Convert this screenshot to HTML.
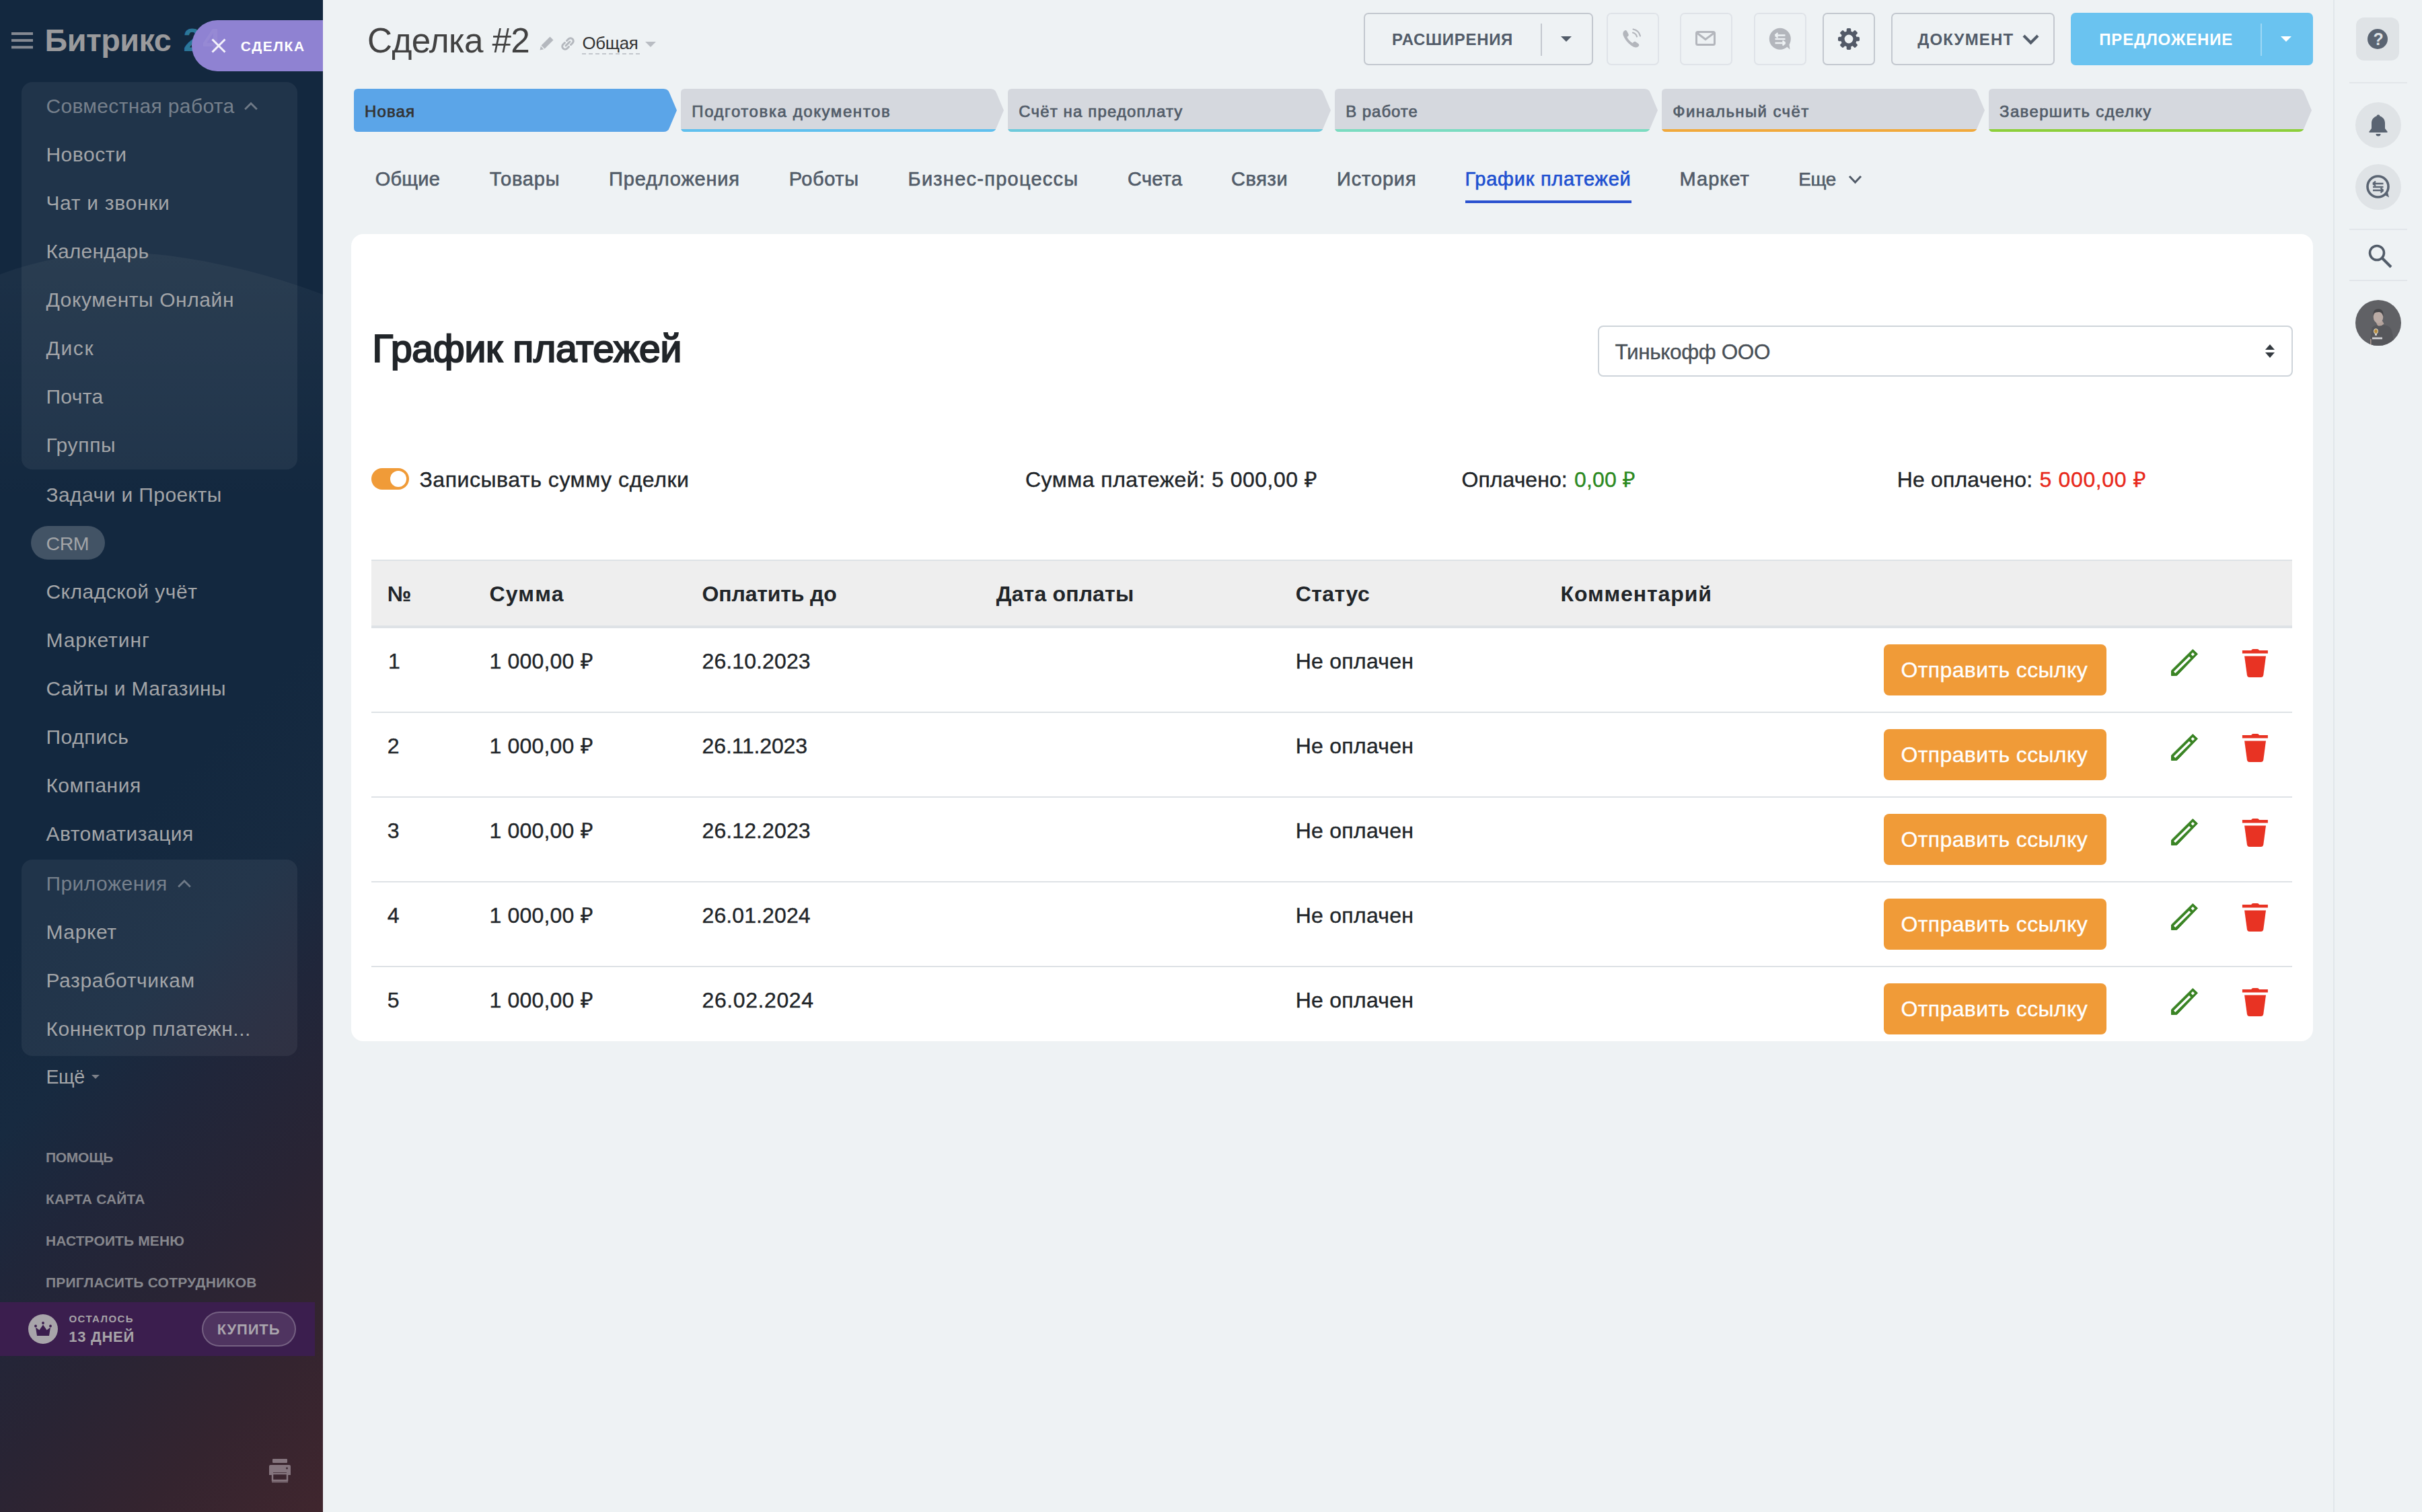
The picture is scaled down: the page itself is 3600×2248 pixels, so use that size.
<!DOCTYPE html>
<html lang="ru">
<head>
<meta charset="utf-8">
<title>Сделка #2</title>
<style>
*{box-sizing:border-box;margin:0;padding:0}
html,body{width:3600px;height:2248px;overflow:hidden;background:#eef2f4;font-family:"Liberation Sans",sans-serif}
@media (max-width:2000px){html{zoom:.5}}
#root{position:relative;width:3600px;height:2248px;overflow:hidden}
.a{position:absolute}
.t{position:absolute;white-space:pre;line-height:1;display:block}
#side{position:absolute;left:0;top:0;width:480px;height:2248px;overflow:hidden;
 background:linear-gradient(135deg,#13283f 0%,#13283f 52%,#172a40 62%,#20263a 70%,#292434 80%,#34242f 90%,#40262e 100%)}
.grp{position:absolute;left:32px;width:410px;border-radius:16px;background:rgba(255,255,255,.06)}
.hb{position:absolute;top:19px;height:78px;border:2px solid #c3c8cf;border-radius:7px}
.hb.dim{border-color:#dfe3e8}
.stage{position:absolute;top:132px;height:64px;width:480px}
.rb-c{position:absolute;width:68px;height:68px;border-radius:50%;background:#dfe3e6;left:3501px}
.rb-l{position:absolute;left:3492px;width:86px;height:2px;background:#e2e6ea}
.btn{position:absolute;left:2800px;width:331px;height:76px;border-radius:8px;background:#f09b38}
.rowl{position:absolute;left:552px;width:2855px;height:2px;background:#dee2e6}
</style>
</head>
<body>
<div id="root">

<!-- ======= LEFT SIDEBAR ======= -->
<div id="side">
  <svg class="a" style="left:0;top:330px" width="480" height="420" viewBox="0 0 480 420"><defs><linearGradient id="cl" x1="0" y1="0" x2="0" y2="1"><stop offset="0" stop-color="#fff" stop-opacity=".042"/><stop offset="1" stop-color="#fff" stop-opacity="0"/></linearGradient></defs><path d="M0 78 C90 44 180 42 250 50 C340 62 420 85 480 108 L480 420 L0 420Z" fill="url(#cl)"/></svg>
  <div class="grp" style="top:122px;height:576px"></div>
  <div class="grp" style="top:1278px;height:292px"></div>
  <div class="a" style="left:46px;top:782px;width:110px;height:50px;border-radius:25px;background:rgba(255,255,255,.2)"></div>
  <div class="a" style="left:17px;top:48px;width:32px;height:3.600px;background:#858a93;box-shadow:0 10.100px 0 #858a93,0 20.300px 0 #858a93"></div>
  <div class="a" style="left:0;top:1936px;width:468px;height:80px;background:#3b1e4e"></div>
  <div class="a" style="left:300px;top:1950px;width:140px;height:52px;border-radius:26px;border:2px solid rgba(255,255,255,.22);background:rgba(255,255,255,.1)"></div>
</div>
<!-- purple slider label -->
<div class="a" style="left:285px;top:30px;width:195px;height:76px;border-radius:38px 0 0 38px;background:#8f82d2;z-index:2"></div>
<svg class="a" style="left:313px;top:56px;z-index:3" width="24" height="24" viewBox="0 0 24 24"><path d="M2.500 2.500L21.500 21.500M21.500 2.500L2.500 21.500" stroke="#f4f2fb" stroke-width="3" fill="none"/></svg>
<span class="t" style="left:301px;top:36.200px;font-size:48px;font-weight:700;color:rgba(255,255,255,.07);z-index:3">4</span>
<!-- sidebar chevrons -->
<svg class="a" style="left:361px;top:149px" width="24" height="16" viewBox="0 0 24 16"><path d="M3.200 13.500L12 4.700L20.800 13.500" stroke="#6f7a87" stroke-width="2.800" fill="none"/></svg>
<svg class="a" style="left:262px;top:1305px" width="24" height="16" viewBox="0 0 24 16"><path d="M3.200 13.500L12 4.700L20.800 13.500" stroke="#6f7a87" stroke-width="2.800" fill="none"/></svg>
<svg class="a" style="left:136px;top:1598px" width="12" height="6" viewBox="0 0 12 6"><path d="M0 0H12L6 6Z" fill="#7b7f88"/></svg>
<!-- crown -->
<svg class="a" style="left:42px;top:1954px" width="44" height="44" viewBox="0 0 44 44"><circle cx="22" cy="22" r="22" fill="#a8a5aa"/><path d="M11 19.5L16.5 23.5L22 15.5L27.5 23.5L33 19.5L31 32H13Z" fill="#3b1e4e"/><circle cx="11" cy="17.5" r="1.9" fill="#3b1e4e"/><circle cx="22" cy="13" r="1.9" fill="#3b1e4e"/><circle cx="33" cy="17.5" r="1.9" fill="#3b1e4e"/></svg>
<!-- printer -->
<svg class="a" style="left:400px;top:2169px" width="32" height="36" viewBox="0 0 32 36"><rect x="5" y="0" width="22" height="6" rx="1" fill="#85757e"/><path d="M2 9H30a2 2 0 0 1 2 2V24H26V20H6V24H0V11a2 2 0 0 1 2-2Z" fill="#85757e"/><rect x="5" y="22" width="22" height="10" fill="none" stroke="#85757e" stroke-width="2.5"/><rect x="4" y="33.5" width="24" height="1.6" fill="#85757e"/><circle cx="26.5" cy="14" r="1.4" fill="#3a2631"/></svg>

<!-- ======= HEADER ======= -->
<svg class="a" style="left:802px;top:53px" width="22" height="22" viewBox="0 0 22 22"><path d="M15.5 1.5L20.5 6.5L7.5 19.5L2.5 14.5Z M1.8 15.8L6.2 20.2L0.5 21.5Z" fill="#b4b8be"/></svg>
<svg class="a" style="left:833px;top:54px" width="22" height="22" viewBox="0 0 22 22"><g fill="none" stroke="#b4b8be" stroke-width="3" stroke-linecap="round"><path d="M9.5 6.5L12 4a4.2 4.2 0 0 1 6 6l-2.5 2.5"/><path d="M12.5 15.5L10 18a4.2 4.2 0 0 1-6-6l2.5-2.5"/><path d="M8 14L14 8"/></g></svg>
<div class="a" style="left:865px;top:79px;width:86px;height:2px;background:repeating-linear-gradient(90deg,#c3c7cd 0 6px,transparent 6px 10px)"></div>
<svg class="a" style="left:959px;top:62px" width="16" height="8" viewBox="0 0 16 8"><path d="M0 0H16L8 8Z" fill="#b9bdc3"/></svg>

<div class="hb" style="left:2027px;width:341px"></div>
<div class="a" style="left:2290px;top:35px;width:2px;height:48px;background:#c3c8cf"></div>
<svg class="a" style="left:2320px;top:54px" width="16" height="8" viewBox="0 0 16 8"><path d="M0 0H16L8 8Z" fill="#525c69"/></svg>
<div class="hb dim" style="left:2388px;width:78px"></div>
<div class="hb dim" style="left:2497px;width:78px"></div>
<div class="hb dim" style="left:2607px;width:78px"></div>
<div class="hb" style="left:2709px;width:78px"></div>
<div class="hb" style="left:2811px;width:243px"></div>
<div class="a" style="left:3078px;top:19px;width:360px;height:78px;border-radius:7px;background:#6ac3f0"></div>
<div class="a" style="left:3360px;top:35px;width:2px;height:48px;background:rgba(255,255,255,.35)"></div>
<svg class="a" style="left:3390px;top:54px" width="16" height="8" viewBox="0 0 16 8"><path d="M0 0H16L8 8Z" fill="#fff"/></svg>
<svg class="a" style="left:3006px;top:51px" width="25" height="16" viewBox="0 0 25 16"><path d="M2 2L12.500 12.500L23 2" stroke="#525c69" stroke-width="4.200" fill="none"/></svg>
<!-- phone -->
<svg class="a" style="left:2410px;top:42px" width="32" height="32" viewBox="0 0 32 32"><path d="M3.5 4.5c1.6-2 3.8-2.3 5 .2l2 4c.6 1.4.2 2.4-.9 3.4l-1.2 1c1.5 3.6 4.6 7 8.2 9l1.3-1.4c1-1 2.2-1.300 3.400-.500l3.700 2.500c2 1.400 1.500 3.400-.300 4.800-2.600 2-6.300 1-10.300-2C8.500 21 4.500 15.500 2.700 10.500 2 8.300 2.300 6 3.500 4.500Z" fill="#b3b6bc"/><path d="M17 6.500a8.500 8.500 0 0 1 6 6M17.500 1.500a13.500 13.500 0 0 1 10.500 10" stroke="#b3b6bc" stroke-width="2.200" fill="none" stroke-linecap="round"/></svg>
<!-- mail -->
<svg class="a" style="left:2520px;top:46px" width="30" height="22" viewBox="0 0 30 22"><rect x="1.500" y="1.500" width="27" height="19" rx="2" fill="none" stroke="#b3b6bc" stroke-width="3"/><path d="M3 3.500L15 12.500L27 3.500" fill="none" stroke="#b3b6bc" stroke-width="3"/></svg>
<!-- chat -->
<svg class="a" style="left:2629px;top:41px" width="34" height="34" viewBox="0 0 34 34"><circle cx="16.800" cy="16.800" r="16" fill="#b3b6bc"/><path d="M24 26L31.500 32.500L30 22Z" fill="#b3b6bc"/><g stroke="#eef2f4" stroke-width="2.300" fill="none"><path d="M9.500 11.500H24.500M9.500 11.500l4-3.300M9.500 11.500l4 3.300"/><path d="M9.500 17H24.500"/><path d="M9.500 23H24.500M24.500 23l-4-3.300M24.500 23l-4 3.300"/></g></svg>
<!-- gear -->
<svg class="a" style="left:2732px;top:42px" width="32" height="32" viewBox="0 0 32 32"><g fill="#525967"><circle cx="16" cy="16" r="11.800"/><rect x="12.700" y="0" width="6.600" height="32" rx="1.800"/><rect x="12.700" y="0" width="6.600" height="32" rx="1.800" transform="rotate(45 16 16)"/><rect x="12.700" y="0" width="6.600" height="32" rx="1.800" transform="rotate(90 16 16)"/><rect x="12.700" y="0" width="6.600" height="32" rx="1.800" transform="rotate(135 16 16)"/></g><circle cx="16" cy="16" r="6.400" fill="#eef2f4"/></svg>

<!-- stages -->
<svg class="a" style="left:526px;top:132px" width="2912" height="64" viewBox="0 0 2912 64">
 <path d="M6 0H460Q467 0 469 6L480 32L469 58Q467 64 460 64H6Q0 64 0 58V6Q0 0 6 0Z" fill="#5ba5e8"/>
 <g transform="translate(486 0)"><path d="M6 0H460Q467 0 469 6L480 32L469 58Q467 64 460 64H6Q0 64 0 58V6Q0 0 6 0Z" fill="#d5d8de"/><path d="M0.300 60Q1.500 64 6 64H460Q466 64 468.200 60Z" fill="#5fc0ee"/></g>
 <g transform="translate(972 0)"><path d="M6 0H460Q467 0 469 6L480 32L469 58Q467 64 460 64H6Q0 64 0 58V6Q0 0 6 0Z" fill="#d5d8de"/><path d="M0.300 60Q1.500 64 6 64H460Q466 64 468.200 60Z" fill="#6dcadb"/></g>
 <g transform="translate(1458 0)"><path d="M6 0H460Q467 0 469 6L480 32L469 58Q467 64 460 64H6Q0 64 0 58V6Q0 0 6 0Z" fill="#d5d8de"/><path d="M0.300 60Q1.500 64 6 64H460Q466 64 468.200 60Z" fill="#7adcc0"/></g>
 <g transform="translate(1944 0)"><path d="M6 0H460Q467 0 469 6L480 32L469 58Q467 64 460 64H6Q0 64 0 58V6Q0 0 6 0Z" fill="#d5d8de"/><path d="M0.300 60Q1.500 64 6 64H460Q466 64 468.200 60Z" fill="#f1a93b"/></g>
 <g transform="translate(2430 0)"><path d="M6 0H460Q467 0 469 6L480 32L469 58Q467 64 460 64H6Q0 64 0 58V6Q0 0 6 0Z" fill="#d5d8de"/><path d="M0.300 60Q1.500 64 6 64H460Q466 64 468.200 60Z" fill="#8ccf3a"/></g>
</svg>
<!-- tabs -->
<div class="a" style="left:2178px;top:298px;width:247px;height:4px;background:#2a51cf"></div>
<svg class="a" style="left:2747px;top:260px" width="21" height="14" viewBox="0 0 21 14"><path d="M2 2L10.500 11L19 2" stroke="#525c69" stroke-width="3" fill="none"/></svg>

<!-- ======= CARD ======= -->
<div class="a" style="left:522px;top:348px;width:2916px;height:1200px;border-radius:18px;background:#fff"></div>
<div class="a" style="left:2375px;top:484px;width:1033px;height:76px;border:2px solid #ced4da;border-radius:8px;background:#fff"></div>
<svg class="a" style="left:3366px;top:512px" width="16" height="20" viewBox="0 0 16 20"><path d="M8 0L15 8H1ZM8 20L1 12H15Z" fill="#343a40"/></svg>
<div class="a" style="left:552px;top:696px;width:56px;height:32px;border-radius:16px;background:#f09b38"></div>
<div class="a" style="left:580px;top:700px;width:24px;height:24px;border-radius:50%;background:#fff"></div>
<!-- table -->
<div class="a" style="left:552px;top:832px;width:2855px;height:102px;background:#eee;border-top:2px solid #dee2e6;border-bottom:4px solid #dee2e6"></div>
<div class="rowl" style="top:1058px"></div><div class="rowl" style="top:1184px"></div><div class="rowl" style="top:1310px"></div><div class="rowl" style="top:1436px"></div>
<div class="btn" style="top:958px"></div>
<svg class="a" style="left:3227px;top:965px" width="40" height="40" viewBox="0 0 40 40"><path fill="#3a8424" stroke="#3a8424" stroke-width="1" stroke-linejoin="round" d="M32.300 0.500L39.500 7.300L8.800 39.300L0.500 39.500L0.500 32Z"/><path fill="#fff" d="M26.900 11.100L29.200 13.500L6.300 35.900L4 33.600Z M32.300 5L35 7.700L32.300 10.400L29.600 7.700Z"/></svg>
<svg class="a" style="left:3332px;top:964px" width="40" height="44" viewBox="0 0 40 44"><path d="M0.900 2.900H14.200Q15.200 1 17 1H23.300Q25.100 1 26.100 2.900H38.900V7.600H0.900Z" fill="#e83323"/><path d="M4.100 11.400H36L32.300 39.500Q31.800 43 28.300 43H11.800Q8.400 43 7.900 39.500Z" fill="#e83323"/></svg>
<div class="btn" style="top:1084px"></div>
<svg class="a" style="left:3227px;top:1091px" width="40" height="40" viewBox="0 0 40 40"><path fill="#3a8424" stroke="#3a8424" stroke-width="1" stroke-linejoin="round" d="M32.300 0.500L39.500 7.300L8.800 39.300L0.500 39.500L0.500 32Z"/><path fill="#fff" d="M26.900 11.100L29.200 13.500L6.300 35.900L4 33.600Z M32.300 5L35 7.700L32.300 10.400L29.600 7.700Z"/></svg>
<svg class="a" style="left:3332px;top:1090px" width="40" height="44" viewBox="0 0 40 44"><path d="M0.900 2.900H14.200Q15.200 1 17 1H23.300Q25.100 1 26.100 2.900H38.900V7.600H0.900Z" fill="#e83323"/><path d="M4.100 11.400H36L32.300 39.500Q31.800 43 28.300 43H11.800Q8.400 43 7.900 39.500Z" fill="#e83323"/></svg>
<div class="btn" style="top:1210px"></div>
<svg class="a" style="left:3227px;top:1217px" width="40" height="40" viewBox="0 0 40 40"><path fill="#3a8424" stroke="#3a8424" stroke-width="1" stroke-linejoin="round" d="M32.300 0.500L39.500 7.300L8.800 39.300L0.500 39.500L0.500 32Z"/><path fill="#fff" d="M26.900 11.100L29.200 13.500L6.300 35.900L4 33.600Z M32.300 5L35 7.700L32.300 10.400L29.600 7.700Z"/></svg>
<svg class="a" style="left:3332px;top:1216px" width="40" height="44" viewBox="0 0 40 44"><path d="M0.900 2.900H14.200Q15.200 1 17 1H23.300Q25.100 1 26.100 2.900H38.900V7.600H0.900Z" fill="#e83323"/><path d="M4.100 11.400H36L32.300 39.500Q31.800 43 28.300 43H11.800Q8.400 43 7.900 39.500Z" fill="#e83323"/></svg>
<div class="btn" style="top:1336px"></div>
<svg class="a" style="left:3227px;top:1343px" width="40" height="40" viewBox="0 0 40 40"><path fill="#3a8424" stroke="#3a8424" stroke-width="1" stroke-linejoin="round" d="M32.300 0.500L39.500 7.300L8.800 39.300L0.500 39.500L0.500 32Z"/><path fill="#fff" d="M26.900 11.100L29.200 13.500L6.300 35.900L4 33.600Z M32.300 5L35 7.700L32.300 10.400L29.600 7.700Z"/></svg>
<svg class="a" style="left:3332px;top:1342px" width="40" height="44" viewBox="0 0 40 44"><path d="M0.900 2.900H14.200Q15.200 1 17 1H23.300Q25.100 1 26.100 2.900H38.900V7.600H0.900Z" fill="#e83323"/><path d="M4.100 11.400H36L32.300 39.500Q31.800 43 28.300 43H11.800Q8.400 43 7.900 39.500Z" fill="#e83323"/></svg>
<div class="btn" style="top:1462px"></div>
<svg class="a" style="left:3227px;top:1469px" width="40" height="40" viewBox="0 0 40 40"><path fill="#3a8424" stroke="#3a8424" stroke-width="1" stroke-linejoin="round" d="M32.300 0.500L39.500 7.300L8.800 39.300L0.500 39.500L0.500 32Z"/><path fill="#fff" d="M26.900 11.100L29.200 13.500L6.300 35.900L4 33.600Z M32.300 5L35 7.700L32.300 10.400L29.600 7.700Z"/></svg>
<svg class="a" style="left:3332px;top:1468px" width="40" height="44" viewBox="0 0 40 44"><path d="M0.900 2.900H14.200Q15.200 1 17 1H23.300Q25.100 1 26.100 2.900H38.900V7.600H0.900Z" fill="#e83323"/><path d="M4.100 11.400H36L32.300 39.500Q31.800 43 28.300 43H11.800Q8.400 43 7.900 39.500Z" fill="#e83323"/></svg>

<!-- ======= RIGHT BAR ======= -->
<div class="a" style="left:3468px;top:0;width:2px;height:2248px;background:#e1e6ea"></div>
<div class="a" style="left:3502px;top:26px;width:64px;height:64px;border-radius:12px;background:#dfe3e6"></div>
<svg class="a" style="left:3519px;top:43px" width="30" height="30" viewBox="0 0 30 30"><circle cx="15" cy="15" r="15" fill="#5a6472"/></svg>
<span class="t" style="left:3527.500px;top:46px;font-size:25px;font-weight:700;color:#dfe3e6">?</span>
<div class="rb-l" style="top:122px"></div>
<div class="rb-c" style="top:152px"></div>
<svg class="a" style="left:3520px;top:169px" width="30" height="34" viewBox="0 0 30 34"><path d="M15 1.500c1.500 0 2.500 1 2.500 2.300C22 5 25 9 25 14v8l3.500 4.500v1.500H1.500V26.500L5 22V14C5 9 8 5 12.500 3.800 12.500 2.500 13.500 1.500 15 1.500Z" fill="#5a6472"/><path d="M11.500 30h7a3.500 3.500 0 0 1-7 0Z" fill="#5a6472"/></svg>
<div class="rb-c" style="top:244px"></div>
<svg class="a" style="left:3516px;top:259px" width="38" height="38" viewBox="0 0 38 38"><circle cx="18.500" cy="18.500" r="15.500" fill="none" stroke="#5a6472" stroke-width="3.600"/><path d="M27 30L35 34.500L32.500 25Z" fill="#5a6472"/><g stroke="#5a6472" stroke-width="2.300" fill="none"><path d="M11 14H26.500M11 14l4-3.300M11 14l4 3.300"/><path d="M11 19H26.500"/><path d="M11 24H26.500M26.500 24l-4-3.300M26.500 24l-4 3.300"/></g></svg>
<div class="rb-l" style="top:340px"></div>
<svg class="a" style="left:3519px;top:362px" width="38" height="38" viewBox="0 0 38 38"><circle cx="14" cy="14" r="10.500" fill="none" stroke="#525c69" stroke-width="3.600"/><path d="M21.500 21.500L35 35" stroke="#525c69" stroke-width="4"/></svg>
<div class="rb-l" style="top:416px"></div>
<svg class="a" style="left:3501px;top:446px" width="68" height="68" viewBox="0 0 68 68"><defs><clipPath id="av"><circle cx="34" cy="34" r="34"/></clipPath></defs><circle cx="34" cy="34" r="34" fill="#606165"/><g clip-path="url(#av)"><path d="M21 68L24.500 41Q29 37 35 37Q44 36.500 48 38.500Q54 41 55 50L58 68Z" fill="#56575b"/><path d="M30.500 33L40 31L42.500 35.500Q38 40 33 38Z" fill="#b3a29b"/><ellipse cx="34" cy="25" rx="7.300" ry="9.600" fill="#baaba5"/><path d="M26.500 24Q25.500 13 34 13.200Q42.500 13 41.500 25Q40 19 36 18Q30 17.500 28 20Q27 22 26.500 24Z" fill="#47474a"/><ellipse cx="30.500" cy="46.500" rx="3" ry="3.700" fill="#b88d3e" stroke="#e4e2dc" stroke-width="1"/><rect x="29" y="50.500" width="3" height="2.200" fill="#e4e2dc"/><rect x="25" y="55.500" width="15" height="2.800" fill="#d2d2d6"/><rect x="22" y="58" width="1.600" height="10" fill="#a8978f"/></g></svg>

<span class="t" style="left:68.4px;top:142.6px;font-size:30.0px;color:#76808c;letter-spacing:0.33px;">Совместная работа</span>
<span class="t" style="left:68.4px;top:214.6px;font-size:30.0px;color:#a3a5a8;letter-spacing:0.56px;">Новости</span>
<span class="t" style="left:68.4px;top:286.6px;font-size:30.0px;color:#a3a5a8;letter-spacing:0.71px;">Чат и звонки</span>
<span class="t" style="left:68.4px;top:358.6px;font-size:30.0px;color:#a3a5a8;letter-spacing:0.16px;">Календарь</span>
<span class="t" style="left:68.4px;top:430.6px;font-size:30.0px;color:#a3a5a8;letter-spacing:0.58px;">Документы Онлайн</span>
<span class="t" style="left:68.4px;top:502.6px;font-size:30.0px;color:#a3a5a8;letter-spacing:1.67px;">Диск</span>
<span class="t" style="left:68.4px;top:574.6px;font-size:30.0px;color:#a3a5a8;letter-spacing:0.35px;">Почта</span>
<span class="t" style="left:68.4px;top:646.6px;font-size:30.0px;color:#a3a5a8;letter-spacing:0.65px;">Группы</span>
<span class="t" style="left:68.4px;top:720.6px;font-size:30.0px;color:#a3a5a8;letter-spacing:0.42px;">Задачи и Проекты</span>
<span class="t" style="left:68.4px;top:793.9px;font-size:28.5px;color:#a3a5a8;letter-spacing:-0.34px;">CRM</span>
<span class="t" style="left:68.4px;top:864.6px;font-size:30.0px;color:#a3a5a8;letter-spacing:0.49px;">Складской учёт</span>
<span class="t" style="left:68.4px;top:936.6px;font-size:30.0px;color:#a3a5a8;letter-spacing:0.96px;">Маркетинг</span>
<span class="t" style="left:68.4px;top:1008.6px;font-size:30.0px;color:#a3a5a8;letter-spacing:0.38px;">Сайты и Магазины</span>
<span class="t" style="left:68.4px;top:1080.6px;font-size:30.0px;color:#a3a5a8;letter-spacing:0.63px;">Подпись</span>
<span class="t" style="left:68.4px;top:1152.6px;font-size:30.0px;color:#a3a5a8;letter-spacing:0.50px;">Компания</span>
<span class="t" style="left:68.4px;top:1224.6px;font-size:30.0px;color:#a3a5a8;letter-spacing:0.48px;">Автоматизация</span>
<span class="t" style="left:68.4px;top:1298.6px;font-size:30.0px;color:#76808c;letter-spacing:0.47px;">Приложения</span>
<span class="t" style="left:68.4px;top:1370.6px;font-size:30.0px;color:#a3a5a8;letter-spacing:0.62px;">Маркет</span>
<span class="t" style="left:68.4px;top:1442.6px;font-size:30.0px;color:#a3a5a8;letter-spacing:0.65px;">Разработчикам</span>
<span class="t" style="left:68.4px;top:1514.6px;font-size:30.0px;color:#a3a5a8;letter-spacing:0.54px;">Коннектор платежн...</span>
<span class="t" style="left:68.4px;top:1586.8px;font-size:28.6px;color:#a3a5a8;letter-spacing:-0.34px;">Ещё</span>
<span class="t" style="left:67.9px;top:1709.5px;font-size:21.0px;font-weight:700;color:#86878d;letter-spacing:-0.25px;">ПОМОЩЬ</span>
<span class="t" style="left:67.9px;top:1771.5px;font-size:21.0px;font-weight:700;color:#86878d;letter-spacing:0.17px;">КАРТА САЙТА</span>
<span class="t" style="left:67.9px;top:1833.7px;font-size:21.0px;font-weight:700;color:#86878d;letter-spacing:0.11px;">НАСТРОИТЬ МЕНЮ</span>
<span class="t" style="left:67.9px;top:1895.7px;font-size:21.0px;font-weight:700;color:#86878d;letter-spacing:0.26px;">ПРИГЛАСИТЬ СОТРУДНИКОВ</span>
<span class="t" style="left:102.5px;top:1952.9px;font-size:15.0px;font-weight:700;color:#a7a4a8;letter-spacing:1.40px;">ОСТАЛОСЬ</span>
<span class="t" style="left:102.3px;top:1977.4px;font-size:22.0px;font-weight:700;color:#a7a4a8;letter-spacing:0.73px;">13 ДНЕЙ</span>
<span class="t" style="left:322.7px;top:1965.6px;font-size:22.0px;font-weight:700;color:#aaa5ad;letter-spacing:0.85px;">КУПИТЬ</span>
<span class="t" style="left:66.6px;top:37.2px;font-size:46.8px;font-weight:700;color:#9a9a9c;letter-spacing:-0.56px;">Битрикс</span>
<span class="t" style="left:272.6px;top:36.2px;font-size:48.0px;font-weight:700;color:#2c7799;letter-spacing:2.61px;">24</span>
<span class="t" style="left:357.7px;top:58.3px;font-size:21.0px;font-weight:700;color:#fff;letter-spacing:1.58px;z-index:3;">СДЕЛКА</span>
<span class="t" style="left:546.1px;top:34.5px;font-size:51.2px;color:#424242;letter-spacing:-0.61px;">Сделка #2</span>
<span class="t" style="left:865.5px;top:52.4px;font-size:25.8px;color:#333;letter-spacing:-0.31px;">Общая</span>
<span class="t" style="left:2069.1px;top:47.3px;font-size:24.0px;font-weight:700;color:#525c69;letter-spacing:0.67px;">РАСШИРЕНИЯ</span>
<span class="t" style="left:2850.2px;top:47.3px;font-size:24.0px;font-weight:700;color:#525c69;letter-spacing:1.14px;">ДОКУМЕНТ</span>
<span class="t" style="left:3120.3px;top:47.3px;font-size:24.0px;font-weight:700;color:#fff;letter-spacing:0.82px;">ПРЕДЛОЖЕНИЕ</span>
<span class="t" style="left:542.1px;top:153.6px;font-size:24.0px;-webkit-text-stroke:0.73px;color:#333;letter-spacing:1.07px;">Новая</span>
<span class="t" style="left:1028.3px;top:153.6px;font-size:24.0px;-webkit-text-stroke:0.73px;color:#525c69;letter-spacing:1.58px;">Подготовка документов</span>
<span class="t" style="left:1514.3px;top:153.6px;font-size:24.0px;-webkit-text-stroke:0.73px;color:#525c69;letter-spacing:1.15px;">Счёт на предоплату</span>
<span class="t" style="left:2000.3px;top:153.6px;font-size:24.0px;-webkit-text-stroke:0.73px;color:#525c69;letter-spacing:0.93px;">В работе</span>
<span class="t" style="left:2486.3px;top:153.6px;font-size:24.0px;-webkit-text-stroke:0.73px;color:#525c69;letter-spacing:1.38px;">Финальный счёт</span>
<span class="t" style="left:2972.1px;top:153.6px;font-size:24.0px;-webkit-text-stroke:0.73px;color:#525c69;letter-spacing:1.34px;">Завершить сделку</span>
<span class="t" style="left:557.7px;top:251.9px;font-size:29.0px;-webkit-text-stroke:0.64px;color:#525c69;letter-spacing:0.21px;">Общие</span>
<span class="t" style="left:727.7px;top:251.9px;font-size:29.0px;-webkit-text-stroke:0.64px;color:#525c69;letter-spacing:0.83px;">Товары</span>
<span class="t" style="left:905.1px;top:251.9px;font-size:29.0px;-webkit-text-stroke:0.64px;color:#525c69;letter-spacing:0.81px;">Предложения</span>
<span class="t" style="left:1172.7px;top:251.9px;font-size:29.0px;-webkit-text-stroke:0.64px;color:#525c69;letter-spacing:0.59px;">Роботы</span>
<span class="t" style="left:1349.6px;top:251.9px;font-size:29.0px;-webkit-text-stroke:0.64px;color:#525c69;letter-spacing:1.25px;">Бизнес-процессы</span>
<span class="t" style="left:1676.1px;top:251.9px;font-size:29.0px;-webkit-text-stroke:0.64px;color:#525c69;letter-spacing:0.25px;">Счета</span>
<span class="t" style="left:1830.1px;top:251.9px;font-size:29.0px;-webkit-text-stroke:0.64px;color:#525c69;letter-spacing:0.57px;">Связи</span>
<span class="t" style="left:1987.1px;top:251.9px;font-size:29.0px;-webkit-text-stroke:0.64px;color:#525c69;letter-spacing:0.84px;">История</span>
<span class="t" style="left:2177.5px;top:251.9px;font-size:29.0px;-webkit-text-stroke:0.64px;color:#2050d0;letter-spacing:0.75px;">График платежей</span>
<span class="t" style="left:2496.6px;top:251.9px;font-size:29.0px;-webkit-text-stroke:0.64px;color:#525c69;letter-spacing:0.98px;">Маркет</span>
<span class="t" style="left:2673.2px;top:252.8px;font-size:27.8px;-webkit-text-stroke:0.62px;color:#525c69;letter-spacing:-0.33px;">Еще</span>
<span class="t" style="left:553.5px;top:489.6px;font-size:57.0px;-webkit-text-stroke:2.13px;color:#212529;letter-spacing:-0.25px;">График платежей</span>
<span class="t" style="left:2400.6px;top:507.8px;font-size:31.5px;-webkit-text-stroke:0.32px;color:#495057;letter-spacing:-0.38px;">Тинькофф ООО</span>
<span class="t" style="left:623.4px;top:697.4px;font-size:32.0px;-webkit-text-stroke:0.38px;color:#212529;letter-spacing:0.56px;">Записывать сумму сделки</span>
<span class="t" style="left:1523.9px;top:697.4px;font-size:32.0px;-webkit-text-stroke:0.38px;color:#212529;letter-spacing:0.50px;">Сумма платежей: 5 000,00 ₽</span>
<span class="t" style="left:2172.5px;top:697.4px;font-size:32.0px;-webkit-text-stroke:0.38px;color:#212529;letter-spacing:0.04px;">Оплачено:</span>
<span class="t" style="left:2340.0px;top:697.4px;font-size:32.0px;-webkit-text-stroke:0.38px;color:#2c8a1f;letter-spacing:0.21px;">0,00 ₽</span>
<span class="t" style="left:2819.7px;top:697.4px;font-size:32.0px;-webkit-text-stroke:0.38px;color:#212529;letter-spacing:0.18px;">Не оплачено:</span>
<span class="t" style="left:3031.5px;top:697.4px;font-size:32.0px;-webkit-text-stroke:0.38px;color:#e8291c;letter-spacing:0.65px;">5 000,00 ₽</span>
<span class="t" style="left:575.8px;top:867.0px;font-size:32.0px;font-weight:700;color:#212529;">№</span>
<span class="t" style="left:727.4px;top:867.0px;font-size:32.0px;font-weight:700;color:#212529;letter-spacing:1.22px;">Сумма</span>
<span class="t" style="left:1043.6px;top:867.0px;font-size:32.0px;font-weight:700;color:#212529;letter-spacing:-0.16px;">Оплатить до</span>
<span class="t" style="left:1480.7px;top:867.0px;font-size:32.0px;font-weight:700;color:#212529;letter-spacing:0.16px;">Дата оплаты</span>
<span class="t" style="left:1925.7px;top:867.0px;font-size:32.0px;font-weight:700;color:#212529;letter-spacing:0.43px;">Статус</span>
<span class="t" style="left:2319.5px;top:867.0px;font-size:32.0px;font-weight:700;color:#212529;letter-spacing:0.90px;">Комментарий</span>
<span class="t" style="left:577.0px;top:967.0px;font-size:32.0px;-webkit-text-stroke:0.38px;color:#212529;">1</span>
<span class="t" style="left:727.4px;top:967.0px;font-size:32.0px;-webkit-text-stroke:0.38px;color:#212529;letter-spacing:0.19px;">1 000,00 ₽</span>
<span class="t" style="left:1043.6px;top:967.0px;font-size:32.0px;-webkit-text-stroke:0.38px;color:#212529;letter-spacing:0.09px;">26.10.2023</span>
<span class="t" style="left:1925.7px;top:967.0px;font-size:32.0px;-webkit-text-stroke:0.38px;color:#212529;letter-spacing:0.27px;">Не оплачен</span>
<span class="t" style="left:2825.5px;top:980.4px;font-size:32.0px;-webkit-text-stroke:0.33px;color:#fff;letter-spacing:0.37px;">Отправить ссылку</span>
<span class="t" style="left:575.8px;top:1093.0px;font-size:32.0px;-webkit-text-stroke:0.38px;color:#212529;">2</span>
<span class="t" style="left:727.4px;top:1093.0px;font-size:32.0px;-webkit-text-stroke:0.38px;color:#212529;letter-spacing:0.19px;">1 000,00 ₽</span>
<span class="t" style="left:1043.6px;top:1093.0px;font-size:32.0px;-webkit-text-stroke:0.38px;color:#212529;letter-spacing:-0.15px;">26.11.2023</span>
<span class="t" style="left:1925.7px;top:1093.0px;font-size:32.0px;-webkit-text-stroke:0.38px;color:#212529;letter-spacing:0.27px;">Не оплачен</span>
<span class="t" style="left:2825.5px;top:1106.4px;font-size:32.0px;-webkit-text-stroke:0.33px;color:#fff;letter-spacing:0.37px;">Отправить ссылку</span>
<span class="t" style="left:575.8px;top:1219.0px;font-size:32.0px;-webkit-text-stroke:0.38px;color:#212529;">3</span>
<span class="t" style="left:727.4px;top:1219.0px;font-size:32.0px;-webkit-text-stroke:0.38px;color:#212529;letter-spacing:0.19px;">1 000,00 ₽</span>
<span class="t" style="left:1043.6px;top:1219.0px;font-size:32.0px;-webkit-text-stroke:0.38px;color:#212529;letter-spacing:0.09px;">26.12.2023</span>
<span class="t" style="left:1925.7px;top:1219.0px;font-size:32.0px;-webkit-text-stroke:0.38px;color:#212529;letter-spacing:0.27px;">Не оплачен</span>
<span class="t" style="left:2825.5px;top:1232.4px;font-size:32.0px;-webkit-text-stroke:0.33px;color:#fff;letter-spacing:0.37px;">Отправить ссылку</span>
<span class="t" style="left:575.8px;top:1345.0px;font-size:32.0px;-webkit-text-stroke:0.38px;color:#212529;">4</span>
<span class="t" style="left:727.4px;top:1345.0px;font-size:32.0px;-webkit-text-stroke:0.38px;color:#212529;letter-spacing:0.19px;">1 000,00 ₽</span>
<span class="t" style="left:1043.6px;top:1345.0px;font-size:32.0px;-webkit-text-stroke:0.38px;color:#212529;letter-spacing:0.09px;">26.01.2024</span>
<span class="t" style="left:1925.7px;top:1345.0px;font-size:32.0px;-webkit-text-stroke:0.38px;color:#212529;letter-spacing:0.27px;">Не оплачен</span>
<span class="t" style="left:2825.5px;top:1358.4px;font-size:32.0px;-webkit-text-stroke:0.33px;color:#fff;letter-spacing:0.37px;">Отправить ссылку</span>
<span class="t" style="left:575.8px;top:1471.0px;font-size:32.0px;-webkit-text-stroke:0.38px;color:#212529;">5</span>
<span class="t" style="left:727.4px;top:1471.0px;font-size:32.0px;-webkit-text-stroke:0.38px;color:#212529;letter-spacing:0.19px;">1 000,00 ₽</span>
<span class="t" style="left:1043.6px;top:1471.0px;font-size:32.0px;-webkit-text-stroke:0.38px;color:#212529;letter-spacing:0.58px;">26.02.2024</span>
<span class="t" style="left:1925.7px;top:1471.0px;font-size:32.0px;-webkit-text-stroke:0.38px;color:#212529;letter-spacing:0.27px;">Не оплачен</span>
<span class="t" style="left:2825.5px;top:1484.4px;font-size:32.0px;-webkit-text-stroke:0.33px;color:#fff;letter-spacing:0.37px;">Отправить ссылку</span>
</div>
</body>
</html>
